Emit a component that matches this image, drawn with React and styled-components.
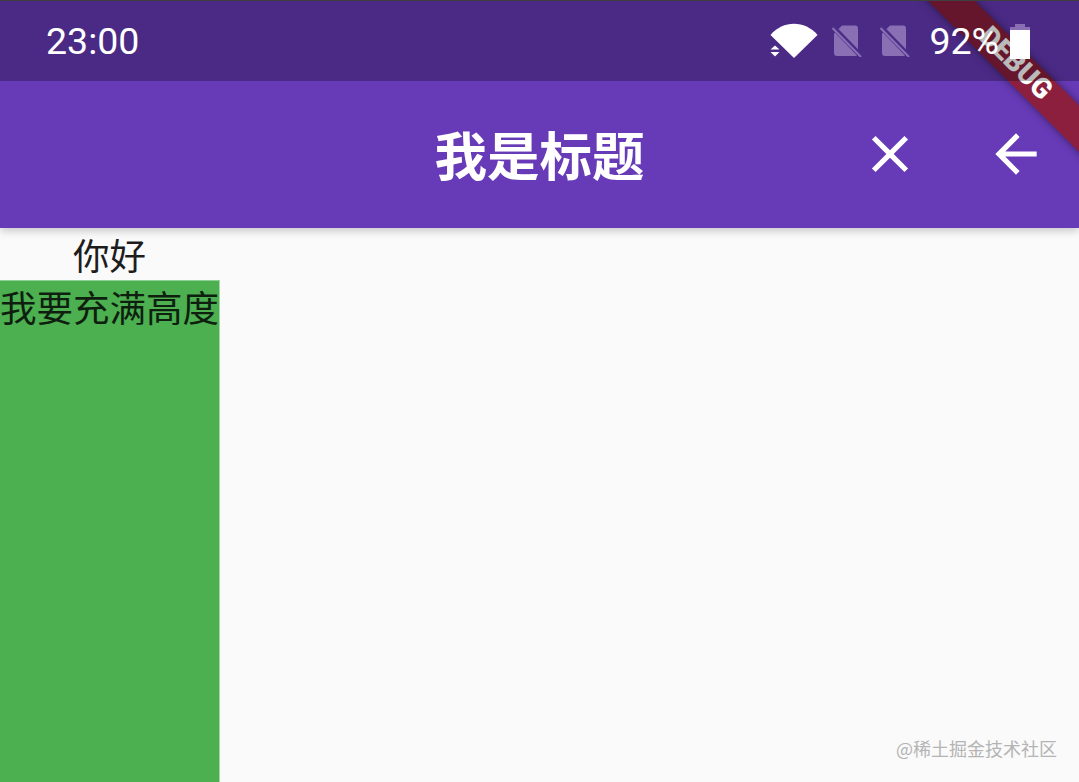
import React from "react";
import styled, { createGlobalStyle } from "styled-components";

const GlobalStyle = createGlobalStyle`
  html, body {
    margin: 0;
    padding: 0;
    height: 100%;
    overflow: hidden;
    background: #fafafa;
  }
  #root {
    height: 100%;
  }
`;

const CJK = `"Noto Sans CJK SC", "Noto Sans", sans-serif`;

const Page = styled.div`
  position: relative;
  height: 100%;
  overflow: hidden;
  display: flex;
  flex-direction: column;
  background: #fafafa;
  font-family: ${CJK};
`;

const Header = styled.header`
  position: relative;
  background: #673ab7;
  box-shadow: 0 3px 8px rgba(0, 0, 0, 0.2);
`;

// sits above the debug ribbon, the scrim darkens whatever is under it
const StatusBar = styled.div`
  position: relative;
  z-index: 3;
  box-sizing: border-box;
  height: 81px;
  border-top: 1px solid #3f3f3f;
  padding: 0 49px 0 46px;
  display: flex;
  align-items: center;
  justify-content: space-between;
  background: rgba(0, 0, 0, 0.27);
  color: #fff;
  font-family: Roboto, sans-serif;
  font-size: 37.5px;
`;

const StatusIcons = styled.div`
  display: flex;
  align-items: center;
`;

const Percent = styled.span`
  margin: 0 11px 0 19px;
`;

const AppBar = styled.div`
  height: 147px;
  display: grid;
  grid-template-columns: 1fr auto 1fr;
  align-items: center;
  color: #fff;
`;

const Title = styled.h1`
  grid-column: 2;
  margin: 0 0 3px;
  font-size: 52.5px;
  line-height: 1;
  font-weight: 700;
`;

const Actions = styled.div`
  grid-column: 3;
  display: flex;
  justify-content: flex-end;
  margin-bottom: 2px;
`;

const IconButton = styled.button`
  width: 126px;
  height: 126px;
  padding: 0;
  border: 0;
  background: none;
  color: #fff;
  display: flex;
  align-items: center;
  justify-content: center;
`;

const Content = styled.main`
  flex: 1;
  width: 220px;
  min-height: 0;
  display: flex;
  flex-direction: column;
`;

const Hello = styled.div`
  height: 52px;
  width: 219px;
  text-align: center;
  font-size: 36.5px;
  line-height: 54px;
  color: #1d1d1d;
`;

const FillBox = styled.div`
  flex: 1;
  box-sizing: border-box;
  border-top: 1px solid #8fcf92;
  border-right: 1px solid #a5d6a7;
  background: #4caf50;
  font-size: 36.5px;
  line-height: 52px;
  white-space: nowrap;
  color: #0e1f0f;
`;

const Watermark = styled.div`
  position: absolute;
  right: 22px;
  bottom: 21px;
  font-size: 18px;
  line-height: 26px;
  color: #b4b4b4;
`;

const Banner = styled.div`
  position: absolute;
  z-index: 2;
  top: 45px;
  left: 862px;
  width: 300px;
  height: 33px;
  transform: rotate(45deg);
  background: rgba(150, 25, 30, 0.8);
  box-shadow: 0 0 8px rgba(0, 0, 0, 0.45);
  display: flex;
  align-items: center;
  justify-content: center;
  padding-left: 8px;
  box-sizing: border-box;
  color: #fff;
  font-family: Roboto, sans-serif;
  font-size: 28px;
  font-weight: 900;
  line-height: 1;
`;

const BannerText = styled.span`
  margin-bottom: 3px;
`;

const WifiIcon = () => (
  <svg width="48" height="36" viewBox="0 0 48 36" fill="#fff">
    <path d="M0.5 12 C 13 -3 35 -3 47.5 12 L24 35 Z" />
    <path d="M0 22 H10 V36 H0 Z" fill="#4b2c87" />
    <path d="M5 22.5 L9.5 26.5 H0.5 Z" />
    <path d="M0.5 29 H9.5 L5 33.5 Z" />
  </svg>
);

const SimOffIcon = ({ className }) => (
  <svg className={className} width="30" height="32" viewBox="0 0 30 32">
    <path
      d="M10 0.5 H23 Q26 0.5 26 3.5 V28 Q26 31 23 31 H5 Q2 31 2 28 V8.5 Z"
      fill="#8a6fb4"
    />
    <path d="M0 1 L29 31" stroke="#4b2c87" strokeWidth="5" />
    <path d="M0.5 3 L29 32" stroke="#8a6fb4" strokeWidth="2" />
  </svg>
);

const SimOff = styled(SimOffIcon)`
  margin-left: ${(p) => p.$gap}px;
`;

const BatteryIcon = () => (
  <svg width="20" height="35" viewBox="0 0 20 35">
    <path d="M5 0 H15 V3 H20 V8 H0 V3 H5 Z" fill="#8a6fb4" />
    <path d="M0 6 H20 V35 H0 Z" fill="#fff" />
  </svg>
);

const CloseIcon = () => (
  <svg width="62" height="62" viewBox="0 0 24 24" fill="currentColor">
    <path d="M19 6.41L17.59 5 12 10.59 6.41 5 5 6.41 10.59 12 5 17.59 6.41 19 12 13.41 17.59 19 19 17.59 13.41 12z" />
  </svg>
);

const BackIcon = () => (
  <svg width="62" height="62" viewBox="0 0 24 24" fill="currentColor">
    <path d="M20 11H7.83l5.59-5.59L12 4l-8 8 8 8 1.41-1.41L7.83 13H20v-2z" />
  </svg>
);

export default function App() {
  return (
    <Page>
      <GlobalStyle />
      <Header>
        <StatusBar>
          <span>23:00</span>
          <StatusIcons>
            <WifiIcon />
            <SimOff $gap={14} />
            <SimOff $gap={18} />
            <Percent>92%</Percent>
            <BatteryIcon />
          </StatusIcons>
        </StatusBar>
        <AppBar>
          <Title>我是标题</Title>
          <Actions>
            <IconButton>
              <CloseIcon />
            </IconButton>
            <IconButton>
              <BackIcon />
            </IconButton>
          </Actions>
        </AppBar>
      </Header>
      <Content>
        <Hello>你好</Hello>
        <FillBox>我要充满高度</FillBox>
      </Content>
      <Watermark>@稀土掘金技术社区</Watermark>
      <Banner>
        <BannerText>DEBUG</BannerText>
      </Banner>
    </Page>
  );
}
